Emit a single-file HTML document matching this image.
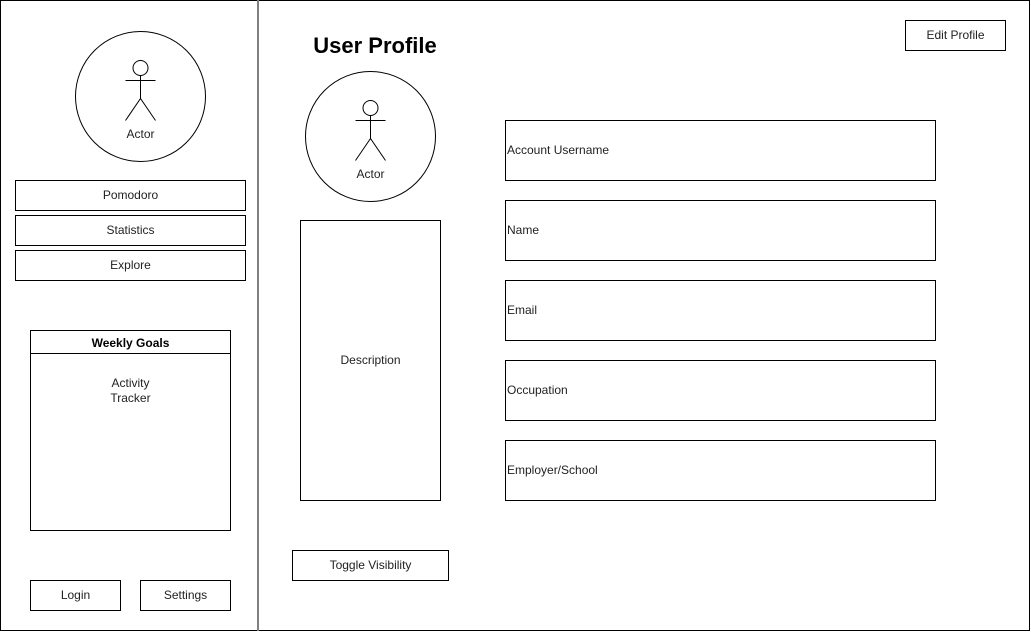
<!DOCTYPE html>
<html><head><meta charset="utf-8"><style>
html,body{margin:0;padding:0;background:#fff;}
svg{display:block;}
text{font-family:"Liberation Sans",Arial,sans-serif;font-size:12px;fill:#222;}
</style></head><body>
<svg width="1031" height="632" viewBox="0 0 1031 632" xmlns="http://www.w3.org/2000/svg">
<g fill="none" stroke="#000" stroke-width="1">
<rect x="0.5" y="0.5" width="1029" height="630"/>
</g>
<line x1="258" y1="0" x2="258" y2="631" stroke="#808080" stroke-width="2"/>
<g fill="#fff" stroke="#000" stroke-width="1">
<circle cx="140.5" cy="96.5" r="65"/>
<circle cx="370.5" cy="136.5" r="65"/>
<rect x="15.5" y="180.5" width="230" height="30"/>
<rect x="15.5" y="215.5" width="230" height="30"/>
<rect x="15.5" y="250.5" width="230" height="30"/>
<rect x="30.5" y="330.5" width="200" height="200"/>
<line x1="30.5" y1="353.5" x2="230.5" y2="353.5"/>
<rect x="30.5" y="580.5" width="90" height="30"/>
<rect x="140.5" y="580.5" width="90" height="30"/>
<rect x="905.5" y="20.5" width="100" height="30"/>
<rect x="300.5" y="220.5" width="140" height="280"/>
<rect x="292.5" y="550.5" width="156" height="30"/>
<rect x="505.5" y="120.5" width="430" height="60"/>
<rect x="505.5" y="200.5" width="430" height="60"/>
<rect x="505.5" y="280.5" width="430" height="60"/>
<rect x="505.5" y="360.5" width="430" height="60"/>
<rect x="505.5" y="440.5" width="430" height="60"/>
</g>
<g fill="none" stroke="#000" stroke-width="1">
<circle cx="140.5" cy="68" r="7.5"/>
<path d="M140.5 75.5V98.5M125.5 80.5H155.5M125.5 120.5L140.5 98.5L155.5 120.5"/>
<circle cx="370.5" cy="108" r="7.5"/>
<path d="M370.5 115.5V138.5M355.5 120.5H385.5M355.5 160.5L370.5 138.5L385.5 160.5"/>
</g>
<text x="140.5" y="138" text-anchor="middle">Actor</text>
<text x="370.5" y="178" text-anchor="middle">Actor</text>
<text x="130.5" y="199" text-anchor="middle">Pomodoro</text>
<text x="130.5" y="234" text-anchor="middle">Statistics</text>
<text x="130.5" y="269" text-anchor="middle">Explore</text>
<text x="130.5" y="347" text-anchor="middle" style="font-weight:bold;fill:#000">Weekly Goals</text>
<text x="130.5" y="387" text-anchor="middle">Activity</text>
<text x="130.5" y="402" text-anchor="middle">Tracker</text>
<text x="75.5" y="599" text-anchor="middle">Login</text>
<text x="185.5" y="599" text-anchor="middle">Settings</text>
<text x="955.5" y="39" text-anchor="middle">Edit Profile</text>
<text x="375" y="53" text-anchor="middle" style="font-size:22px;font-weight:bold;fill:#000">User Profile</text>
<text x="370.5" y="364" text-anchor="middle">Description</text>
<text x="370.5" y="569" text-anchor="middle">Toggle Visibility</text>
<text x="507" y="154">Account Username</text>
<text x="507" y="234">Name</text>
<text x="507" y="314">Email</text>
<text x="507" y="394">Occupation</text>
<text x="507" y="474">Employer/School</text>
</svg>
</body></html>
